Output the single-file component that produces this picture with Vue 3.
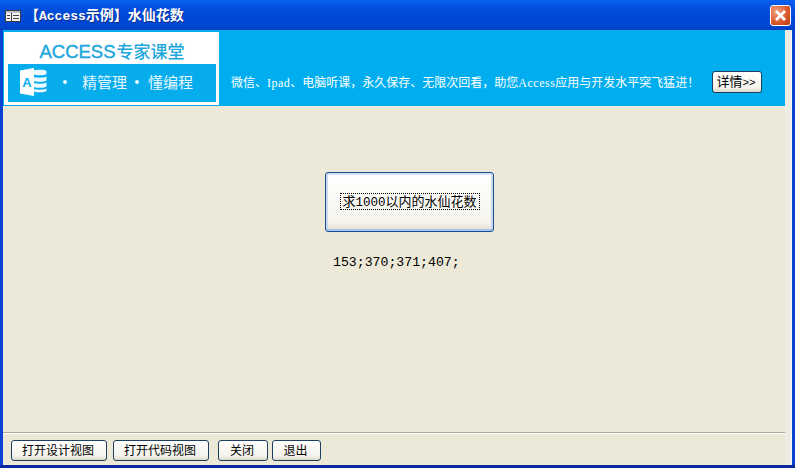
<script setup>
const footerButtons = [
  { label: '打开设计视图', cls: 'wide' },
  { label: '打开代码视图', cls: 'wide after' },
  { label: '关闭', cls: 'small gap' },
  { label: '退出', cls: 'small last' }
]
</script>

<template>
  <div class="window">
    <header class="titlebar">
      <svg class="form-icon" width="16" height="12" viewBox="0 0 16 12">
        <rect x="0.5" y="0.5" width="15" height="11" fill="#f4f4f4" stroke="#3c3c3c" />
        <rect x="1" y="1" width="14" height="2" fill="#b9bec9" />
        <path d="M6.500 3v8" stroke="#3c3c3c" fill="none" />
        <path d="M2 5.500h3M2 8.500h3M8 5.500h6M8 8.500h6" stroke="#3c3c3c" fill="none" />
      </svg>
      <span class="title">【<span class="title-latin">Access</span>示例】水仙花数</span>
      <button class="close" aria-label="关闭窗口">
        <svg width="13" height="13" viewBox="0 0 13 13">
          <path d="M2 2l9 9M11 2l-9 9" stroke="#fff" stroke-width="2.8" fill="none" />
        </svg>
      </button>
    </header>
    <div class="client">
      <div class="content">
        <section class="banner">
          <div class="logo">
            <div class="logo-title">ACCESS<span class="logo-cn">专家课堂</span></div>
            <div class="logo-panel">
              <svg class="access-icon" width="28" height="28" viewBox="0 0 28 28">
                <path d="M13 3c1-1.600 12-1.600 13.500 0v3c-1.500 1.800-12 1.800-13.500 0z" fill="#eefaff" />
                <path d="M13 8.500c2 1.600 11.500 1.600 13.500 0v4c-1.500 1.800-12 1.800-13.500 0z" fill="#eefaff" />
                <path d="M13 14.500c2 1.600 11.500 1.600 13.500 0v4c-1.500 1.800-12 1.800-13.500 0z" fill="#eefaff" />
                <path d="M13 20.500c2 1.600 11.500 1.600 13.500 0v2.500c-1.500 1.800-12 1.800-13.500 0z" fill="#eefaff" />
                <path d="M0 2.500L14 0v28L0 25.500z" fill="#fff" />
                <text x="7" y="18.500" class="icon-a">A</text>
              </svg>
              <span class="dot first"></span>
              <span class="slogan">精管理</span>
              <span class="dot"></span>
              <span class="slogan">懂编程</span>
            </div>
          </div>
          <p class="promo">微信、<span class="promo-latin">Ipad</span>、电脑听课，永久保存、无限次回看，助您<span class="promo-latin">Access</span>应用与开发水平突飞猛进！</p>
          <button class="btn detail">详情<span class="chevrons">&gt;&gt;</span></button>
        </section>
        <main class="body">
          <button class="run"><span class="focus">求<span class="digits">1000</span>以内的水仙花数</span></button>
          <div class="result">153;370;371;407;</div>
        </main>
        <footer class="footer">
          <button v-for="b in footerButtons" :key="b.label" class="btn" :class="b.cls">{{ b.label }}</button>
        </footer>
      </div>
    </div>
  </div>
</template>

<style scoped>
.window {
  width: 795px;
  height: 468px;
  display: flex;
  flex-direction: column;
  overflow: hidden;
  box-sizing: border-box;
  background: #0a44d4;
  border-bottom: 3px solid #08289c;
  font-family: "Noto Sans CJK SC", "Liberation Sans", sans-serif;
}
.titlebar {
  height: 30px;
  flex: none;
  display: flex;
  align-items: center;
  padding: 0 4px 0 5px;
  box-sizing: border-box;
  background: linear-gradient(180deg, #0a5fe8 0, #0a5ff0 2px, #0353e0 5px, #0049d8 16px, #0046d2 25px, #003fc0 30px);
}
.form-icon {
  flex: none;
  margin-top: 1px;
}
.title {
  margin-left: 4px;
  color: #fff;
  font-size: 14px;
  font-weight: 700;
  line-height: 30px;
  white-space: nowrap;
  text-shadow: 1px 1px 0 #0b2f90;
}
.title-latin {
  font-family: "Liberation Mono", monospace;
  font-size: 13px;
}
.close {
  margin-left: auto;
  width: 21px;
  height: 21px;
  padding: 0;
  display: flex;
  align-items: center;
  justify-content: center;
  border: 1px solid #fff;
  border-radius: 3px;
  background: radial-gradient(circle at 30% 30%, #f0a080, #d8572a 60%, #bd3a12);
}
.client {
  flex: 1;
  min-height: 0;
  margin: 0 3px;
  display: flex;
  background: #eeece2;
  border-right: 1px solid #f8f8f4;
}
.content {
  width: 782px;
  flex: none;
  display: flex;
  flex-direction: column;
  background: #ece9d8;
}
.banner {
  height: 76px;
  flex: none;
  display: flex;
  align-items: flex-start;
  box-sizing: border-box;
  background: #00aeef;
}
.logo {
  flex: none;
  width: 215px;
  height: 73px;
  margin: 2px 0 0 1px;
  padding: 0 3px 3px 4px;
  box-sizing: border-box;
  display: flex;
  flex-direction: column;
  background: #fff;
}
.logo-title {
  height: 32px;
  flex: none;
  text-align: center;
  color: #1ba6dc;
  font-family: "Liberation Sans", sans-serif;
  font-size: 18.500px;
  line-height: 37px;
  white-space: nowrap;
  -webkit-text-stroke: 0.4px #1ba6dc;
}
.logo-cn {
  margin-left: 1px;
  font-family: "Noto Sans CJK SC", sans-serif;
  font-size: 17px;
  font-weight: 500;
  -webkit-text-stroke: 0;
}
.logo-panel {
  flex: 1;
  display: flex;
  align-items: center;
  padding: 0 0 3px 12px;
  background: #06acec;
  color: #e6f8fe;
}
.access-icon {
  flex: none;
}
.icon-a {
  font-family: "Liberation Sans", sans-serif;
  font-size: 13px;
  font-weight: 700;
  fill: #06acec;
  text-anchor: middle;
}
.dot {
  width: 4px;
  height: 4px;
  margin: 0 9px 0 8px;
  border-radius: 50%;
  background: #e6f8fe;
}
.dot.first {
  margin-left: 15px;
  margin-right: 15px;
}
.slogan {
  font-size: 15px;
  white-space: nowrap;
}
.promo {
  margin: 43px 0 0 12px;
  width: 473px;
  flex: none;
  color: #fff;
  font-size: 12px;
  line-height: 18px;
  white-space: nowrap;
}
.promo-latin {
  font-family: "Liberation Serif", serif;
  font-size: 12px;
  letter-spacing: 0.5px;
}
.btn {
  padding: 0 2px 2px 0;
  height: 21px;
  box-sizing: border-box;
  border: 1px solid #1f3f5f;
  border-radius: 3px;
  background: linear-gradient(180deg, #ffffff, #f3f2ea 80%, #dcd8c8);
  color: #000;
  font-family: inherit;
  font-size: 12px;
  line-height: 17px;
  white-space: nowrap;
}
.detail {
  flex: none;
  width: 50px;
  height: 22px;
  margin-top: 41px;
  margin-left: 8px;
  font-size: 13px;
}
.chevrons {
  font-family: "Liberation Mono", monospace;
  font-size: 11px;
}
.body {
  flex: 1;
  min-height: 0;
  display: flex;
  flex-direction: column;
  align-items: flex-start;
  padding: 66px 0 0 322px;
  box-sizing: border-box;
  border-bottom: 1px solid #aca899;
}
.run {
  width: 169px;
  height: 60px;
  padding: 0 0 1px;
  display: flex;
  align-items: center;
  justify-content: center;
  box-sizing: border-box;
  border: 1px solid #1c4f8f;
  border-radius: 3px;
  background: linear-gradient(180deg, #fff, #f4f3ec 85%, #e3e0d2);
  box-shadow: inset 0 -2px 0 #a9c4ee, inset 2px 0 0 #c9d9f3, inset -2px 0 0 #c9d9f3, inset 0 2px 0 #d6e2f6;
  color: #000;
  font-family: inherit;
  cursor: default;
}
.focus {
  display: block;
  width: 138px;
  height: 15px;
  box-sizing: border-box;
  outline: 1px dotted #000;
  font-size: 13px;
  line-height: 14px;
  white-space: nowrap;
  text-align: center;
}
.digits {
  font-family: "Liberation Mono", monospace;
  font-size: 12.500px;
}
.result {
  margin: 22px 0 0 8px;
  color: #000;
  font-family: "Liberation Mono", "Noto Sans CJK SC", monospace;
  font-size: 13.200px;
  line-height: 18px;
}
.footer {
  height: 32px;
  flex: none;
  display: flex;
  align-items: flex-start;
  gap: 6px;
  padding: 6px 0 0 8px;
  box-sizing: border-box;
  border-top: 1px solid #fff;
}
.wide {
  width: 96px;
}
.after {
  margin-right: 3px;
}
.small {
  width: 50px;
}
.last {
  width: 49px;
  margin-left: -2px;
}
</style>
